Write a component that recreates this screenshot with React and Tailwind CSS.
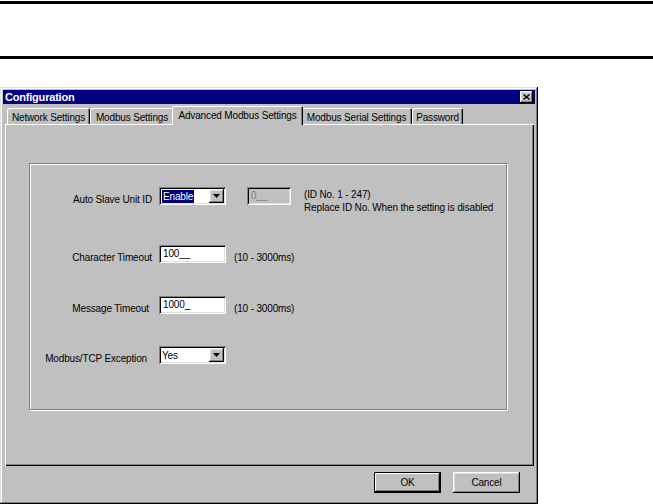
import React from "react";

const raised =
  "shadow-[inset_-1px_-1px_0_#000,inset_1px_1px_0_#fff,inset_-2px_-2px_0_#808080,inset_2px_2px_0_#dfdfdf]";
const sunken =
  "shadow-[inset_1px_1px_0_#808080,inset_-1px_-1px_0_#fff,inset_2px_2px_0_#000,inset_-2px_-2px_0_#dfdfdf]";

function Arrow() {
  return (
    <svg width="7" height="4" viewBox="0 0 7 4" className="block">
      <path d="M0 0h7L3.5 4z" fill="#000" />
    </svg>
  );
}

function Select({ children }) {
  return (
    <div className={`flex w-[67px] h-[18px] bg-white p-[2px] shrink-0 ${sunken}`}>
      <div className="flex-1 flex items-center pl-[1px] leading-[13px]">{children}</div>
      <div className={`w-[15px] h-[14px] bg-[#c0c0c0] flex items-center justify-center ${raised}`}>
        <Arrow />
      </div>
    </div>
  );
}

function TextBox({ value, disabled, w = "w-[67px]" }) {
  return (
    <div
      className={`${w} h-[18px] shrink-0 pl-[4px] pt-[2px] leading-[13px] ${sunken} ${
        disabled ? "bg-[#c0c0c0] text-[#808080]" : "bg-white text-black"
      }`}
    >
      {value}
    </div>
  );
}

const tabShadow =
  "shadow-[inset_1px_1px_0_#fff,inset_-1px_0_0_#000,inset_-2px_0_0_#808080]";

function Tab({ label, w, active }) {
  if (active) {
    return (
      <div
        className={`${w} shrink-0 relative z-10 h-[19px] -mx-[2px] bg-[#c0c0c0] flex justify-center pt-[3px] whitespace-nowrap rounded-t-[2px] ${tabShadow}`}
      >
        {label}
      </div>
    );
  }
  return (
    <div
      className={`${w} shrink-0 h-[16px] mb-[1px] flex justify-center pt-[3px] whitespace-nowrap rounded-t-[2px] ${tabShadow}`}
    >
      {label}
    </div>
  );
}

function Button({ children, isDefault }) {
  if (isDefault) {
    return (
      <div className="w-[67px] h-[21px] border border-black">
        <div className="w-full h-full flex items-center justify-center shadow-[inset_-1px_-1px_0_#000,inset_1px_1px_0_#fff,inset_-2px_-2px_0_#808080]">
          {children}
        </div>
      </div>
    );
  }
  return (
    <div className={`w-[67px] h-[21px] flex items-center justify-center ${raised}`}>
      {children}
    </div>
  );
}

const label = "shrink-0 text-right pt-[6px] leading-[13px] whitespace-nowrap";

export default function App() {
  return (
    <div
      className="w-[653px] h-[504px] bg-white overflow-hidden text-[10px] tracking-[-0.15px] text-black"
      style={{ fontFamily: '"Liberation Sans", Arial, sans-serif' }}
    >
      <div className="h-[3px] bg-black mt-[1px]" />
      <div className="h-[3px] bg-black mt-[52px]" />

      <div className="mt-[28px] w-[538px] bg-[#c0c0c0] p-[3px] shadow-[inset_-1px_-1px_0_#000,inset_1px_1px_0_#dfdfdf,inset_-2px_-2px_0_#808080,inset_2px_2px_0_#fff]">
        {/* title bar */}
        <div className="h-[14px] bg-[#000080] flex items-center justify-between pl-[2px] pr-[2px]">
          <span className="text-white font-bold text-[11px] tracking-[-0.2px] leading-[14px]">Configuration</span>
          <div className={`w-[13px] h-[12px] bg-[#c0c0c0] flex items-center justify-center ${raised}`}>
            <svg width="7" height="6" viewBox="0 0 7 6" className="block">
              <path d="M0.5 0.5L6.5 5.5M6.5 0.5L0.5 5.5" stroke="#000" strokeWidth="1.4" />
            </svg>
          </div>
        </div>

        {/* tabs */}
        <div className="mt-[2px] ml-[4px] flex items-end h-[19px] relative z-10 leading-[13px]">
          <Tab label="Network Settings" w="w-[83px]" />
          <Tab label="Modbus Settings" w="w-[84px]" />
          <Tab label="Advanced Modbus Settings" w="w-[131px]" active />
          <Tab label="Modbus Serial Settings" w="w-[111px]" />
          <Tab label="Password" w="w-[51px]" />
        </div>

        {/* panel */}
        <div className="-mt-[1px] ml-[2px] w-[529px] h-[342px] pt-[39px] pl-[24px] shadow-[inset_1px_1px_0_#fff,inset_-1px_-1px_0_#000,inset_-2px_-2px_0_#808080]">
          <div className="w-[478px] h-[247px] border border-[#808080] shadow-[1px_1px_0_#fff,inset_1px_1px_0_#fff]">
            {/* row 1 */}
            <div className="flex items-start h-[18px] mt-[23px]">
              <div className={`w-[122px] ${label}`}>Auto Slave Unit ID</div>
              <div className="ml-[7px]">
                <Select>
                  <span className="bg-[#000080] text-white px-[1px] leading-[13px]">Enable</span>
                </Select>
              </div>
              <div className="ml-[21px]">
                <TextBox value="0__" disabled w="w-[44px]" />
              </div>
              <div className="ml-[13px] pt-[1px] leading-[13px] whitespace-nowrap">
                <div>(ID No. 1 - 247)</div>
                <div>Replace ID No. When the setting is disabled</div>
              </div>
            </div>

            {/* row 2 */}
            <div className="flex items-start h-[18px] mt-[40px]">
              <div className={`w-[122px] ${label}`}>Character Timeout</div>
              <div className="ml-[7px]">
                <TextBox value="100__" />
              </div>
              <div className="ml-[8px] pt-[6px] leading-[13px] whitespace-nowrap">(10 - 3000ms)</div>
            </div>

            {/* row 3 */}
            <div className="flex items-start h-[18px] mt-[33px]">
              <div className={`w-[119px] ${label}`}>Message Timeout</div>
              <div className="ml-[10px]">
                <TextBox value="1000_" />
              </div>
              <div className="ml-[8px] pt-[6px] leading-[13px] whitespace-nowrap">(10 - 3000ms)</div>
            </div>

            {/* row 4 */}
            <div className="flex items-start h-[18px] mt-[32px]">
              <div className={`w-[117px] ${label}`}>Modbus/TCP Exception</div>
              <div className="ml-[12px]">
                <Select>
                  <span className="leading-[13px]">Yes</span>
                </Select>
              </div>
            </div>
          </div>
        </div>

        {/* buttons */}
        <div className="flex justify-end gap-[12px] pr-[15px] mt-[6px] mb-[8px]">
          <Button isDefault>OK</Button>
          <Button>Cancel</Button>
        </div>
      </div>
    </div>
  );
}
